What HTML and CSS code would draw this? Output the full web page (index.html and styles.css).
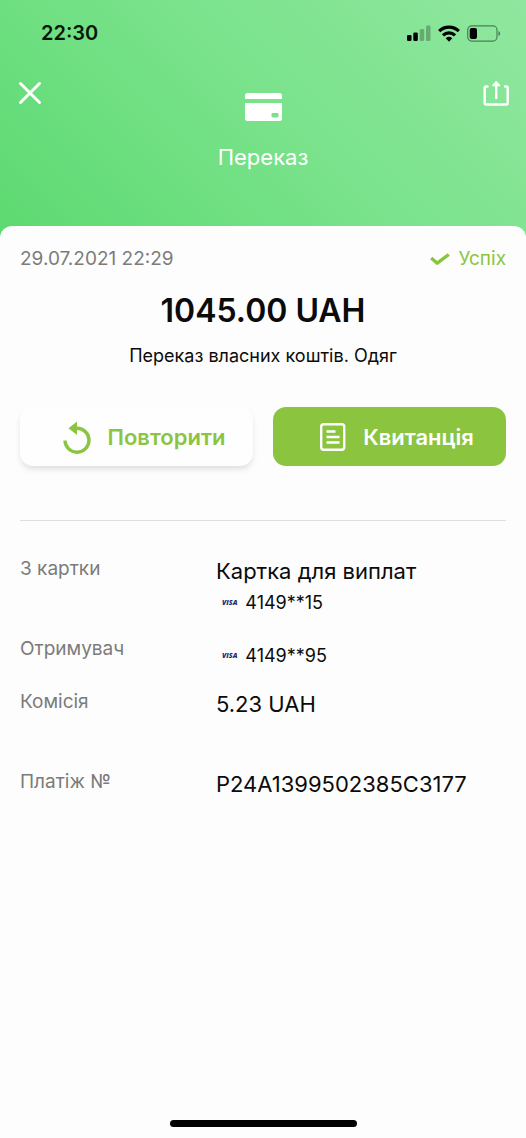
FILE: index.html
```html
<!DOCTYPE html>
<html lang="uk">
<head>
<meta charset="utf-8">
<meta name="viewport" content="width=device-width, initial-scale=1">
<title>Переказ</title>
<link rel="stylesheet" href="styles.css">
</head>
<body>
<div class="screen">
  <header class="header">
    <div class="status-bar">
      <time class="clock">22:30</time>
      <div class="status-icons">
        <svg width="24" height="16" viewBox="0 0 24 16" aria-hidden="true">
          <rect x="0" y="10" width="4.5" height="6" rx="1.3"/>
          <rect x="6.3" y="7.5" width="4.5" height="8.5" rx="1.3"/>
          <rect x="12.7" y="4" width="4.5" height="12" rx="1.3" opacity=".25"/>
          <rect x="19" y="0.500" width="4.500" height="15.500" rx="1.300" opacity=".25"/>
        </svg>
        <svg width="22" height="17" viewBox="0 0 22 17" aria-hidden="true">
          <g fill="none" stroke="#000" stroke-width="3.200">
            <path d="M1.200 6.200a14 14 0 0 1 19.600 0"/>
            <path d="M5 10.400a8.600 8.600 0 0 1 12 0"/>
          </g>
          <path d="M7.700 13.200a5 5 0 0 1 6.600 0L11 16.700z"/>
        </svg>
        <svg width="34" height="17" viewBox="0 0 34 17" aria-hidden="true">
          <rect x=".7" y=".9" width="29.300" height="15.200" rx="4" fill="none" stroke="#000" stroke-opacity=".45" stroke-width="1.200"/>
          <rect x="2.700" y="3" width="7.300" height="11" rx="2"/>
          <path d="M31.500 6v5c2-.8 2-4.200 0-5z" opacity=".5"/>
        </svg>
      </div>
    </div>
    <div class="toolbar">
      <button class="icon-button" type="button" aria-label="Закрити">
        <svg width="24" height="24" viewBox="0 0 24 24" fill="none" stroke="#fff" stroke-width="3" stroke-linecap="round" aria-hidden="true"><path d="M2.500 2.500l19 19M21.500 2.500l-19 19"/></svg>
      </button>
      <div class="heading">
        <svg width="37" height="28" viewBox="0 0 37 28" fill="#fff" aria-hidden="true">
          <path d="M2.500 0h32A2.500 2.500 0 0 1 37 2.500V6H0V2.500A2.500 2.500 0 0 1 2.500 0z"/>
          <path fill-rule="evenodd" d="M0 10h37v15.500a2.500 2.500 0 0 1-2.500 2.500h-32A2.500 2.500 0 0 1 0 25.500zm27.500 10a1 1 0 0 0-1 1v2.500a1 1 0 0 0 1 1h5a1 1 0 0 0 1-1V21a1 1 0 0 0-1-1z"/>
        </svg>
        <h1 class="title">Переказ</h1>
      </div>
      <button class="icon-button icon-button-end" type="button" aria-label="Поділитися">
        <svg width="26" height="26" viewBox="0 0 26 26" fill="none" stroke="#fff" stroke-width="2.400" stroke-linecap="round" stroke-linejoin="round" aria-hidden="true">
          <path d="M4.500 6.500H3.200a1.500 1.500 0 0 0-1.500 1.500v15a1.500 1.500 0 0 0 1.500 1.500h20a1.500 1.500 0 0 0 1.500-1.500V8a1.500 1.500 0 0 0-1.500-1.500H22"/>
          <path d="M13.200 18V4"/><path d="M9.800 5.400l3.400-3.600 3.400 3.600z" fill="#fff" stroke-width="1.500"/>
        </svg>
      </button>
    </div>
  </header>

  <main class="sheet">
    <div class="meta">
      <time datetime="2021-07-29T22:29">29.07.2021 22:29</time>
      <span class="state">
        <svg width="20" height="14" viewBox="0 0 20 14" fill="none" stroke="#8bc540" stroke-width="3.400" stroke-linejoin="round" aria-hidden="true"><path d="M1.200 6l6 5.200L18.800 2.500"/></svg>
        Успіх
      </span>
    </div>
    <p class="amount">1045.00 UAH</p>
    <p class="purpose">Переказ власних коштів. Одяг</p>

    <div class="actions">
      <button class="button" type="button">
        <svg width="28" height="34" viewBox="0 0 28 34" aria-hidden="true">
          <path d="M2 20.500A12 12 0 1 0 14 8.200H11" fill="none" stroke="#8bc540" stroke-width="3.400"/>
          <path d="M5.500 8.200L14 1.500v13.500z" fill="#8bc540"/>
        </svg>
        Повторити
      </button>
      <button class="button button-primary" type="button">
        <svg width="26" height="28" viewBox="0 0 26 28" fill="none" stroke="#fff" aria-hidden="true">
          <rect x="1.200" y="1.200" width="23" height="25.600" rx="2.500" stroke-width="2.400"/>
          <path d="M6.500 8.500h9M6.500 14h13M6.500 19.500h13" stroke-width="2.400"/>
        </svg>
        Квитанція
      </button>
    </div>

    <dl class="details">
      <div class="detail">
        <dt>З картки</dt>
        <dd><span class="value">Картка для виплат</span><span class="card"><span class="visa">VISA</span>4149**15</span></dd>
      </div>
      <div class="detail">
        <dt>Отримувач</dt>
        <dd class="card-only"><span class="card"><span class="visa">VISA</span>4149**95</span></dd>
      </div>
      <div class="detail">
        <dt>Комісія</dt>
        <dd class="two-line"><span class="value">5.23 UAH</span></dd>
      </div>
      <div class="detail">
        <dt>Платіж №</dt>
        <dd class="two-line"><span class="value">P24A1399502385C3177</span></dd>
      </div>
    </dl>
    <div class="home-indicator"></div>
  </main>
</div>
</body>
</html>
```
FILE: styles.css
```css
* {
  box-sizing: border-box;
}

body {
  margin: 0;
  background: #fdfdfd;
  color: #0b0b0b;
  font-family: Inter, "Liberation Sans", sans-serif;
}

h1,
p,
dl,
dd {
  margin: 0;
}

svg {
  display: block;
  flex: none;
}

button {
  font: inherit;
  border: 0;
  cursor: pointer;
}

.screen {
  display: flex;
  flex-direction: column;
  min-height: 100vh;
}

.header {
  padding-bottom: 75px;
  background: linear-gradient(45deg, #5cd970, #78e28a 50%, #90e79f);
}

.status-bar {
  display: flex;
  align-items: center;
  justify-content: space-between;
  height: 66px;
  padding: 0 25px 0 41px;
}

.clock {
  color: #06180a;
  font-size: 20px;
  font-weight: 600;
}

.status-icons {
  display: flex;
  align-items: center;
  gap: 7px;
}

.toolbar {
  display: grid;
  grid-template-columns: 1fr auto 1fr;
  align-items: start;
  padding: 0 16px;
}

.icon-button {
  display: flex;
  align-items: center;
  justify-self: start;
  height: 54px;
  padding: 0 2px;
  background: none;
}

.icon-button-end {
  justify-self: end;
  padding: 0 1px;
}

.heading {
  display: flex;
  flex-direction: column;
  align-items: center;
  gap: 22px;
  padding-top: 27px;
}

.title {
  color: #fff;
  font-size: 22px;
  font-weight: 400;
  line-height: 28px;
}

.sheet {
  display: flex;
  flex: 1;
  flex-direction: column;
  margin-top: -20px;
  padding: 21px 20px 11px;
  border-radius: 12px 12px 0 0;
  background: #fdfdfd;
}

.meta {
  display: flex;
  justify-content: space-between;
  color: #7b7b7b;
  font-size: 19px;
  line-height: 24px;
}

.state {
  display: flex;
  align-items: center;
  gap: 9px;
  color: #8bc540;
}

.amount {
  margin-top: 20px;
  font-size: 32px;
  font-weight: 600;
  line-height: 40px;
  text-align: center;
}

.purpose {
  margin-top: 13px;
  font-size: 18px;
  line-height: 24px;
  text-align: center;
}

.actions {
  display: grid;
  grid-template-columns: 1fr 1fr;
  gap: 20px;
  margin-top: 39px;
}

.button {
  display: flex;
  align-items: center;
  justify-content: center;
  gap: 17px;
  height: 59px;
  padding: 0 0 0 15px;
  border-radius: 13px;
  background: #fefefe;
  box-shadow: 0 4px 6px -1px rgba(0, 0, 0, 0.13);
  color: #8bc540;
  font-size: 22px;
  font-weight: 600;
}

.button-primary {
  background: #8bc540;
  box-shadow: none;
  color: #fff;
}

.details {
  display: grid;
  gap: 18px;
  margin-top: 54px;
  padding-top: 35px;
  border-top: 1px solid #dedede;
}

.detail {
  display: grid;
  grid-template-columns: 196px 1fr;
  align-items: start;
}

.detail dt {
  padding-top: 1px;
  color: #7b7b7b;
  font-size: 19px;
  line-height: 24px;
}

.value {
  display: block;
  font-size: 22px;
  line-height: 30px;
}

.two-line {
  min-height: 62px;
}

.card-only {
  padding-top: 3px;
}

.card {
  display: flex;
  align-items: center;
  gap: 8px;
  height: 32px;
  padding-left: 6px;
  font-size: 18px;
}

.visa {
  color: #252a68;
  font-family: "Open Sans", sans-serif;
  font-size: 7px;
  font-style: italic;
  font-weight: 800;
}

.home-indicator {
  align-self: center;
  width: 187px;
  height: 7px;
  margin-top: auto;
  border-radius: 4px;
  background: #000;
}
```
